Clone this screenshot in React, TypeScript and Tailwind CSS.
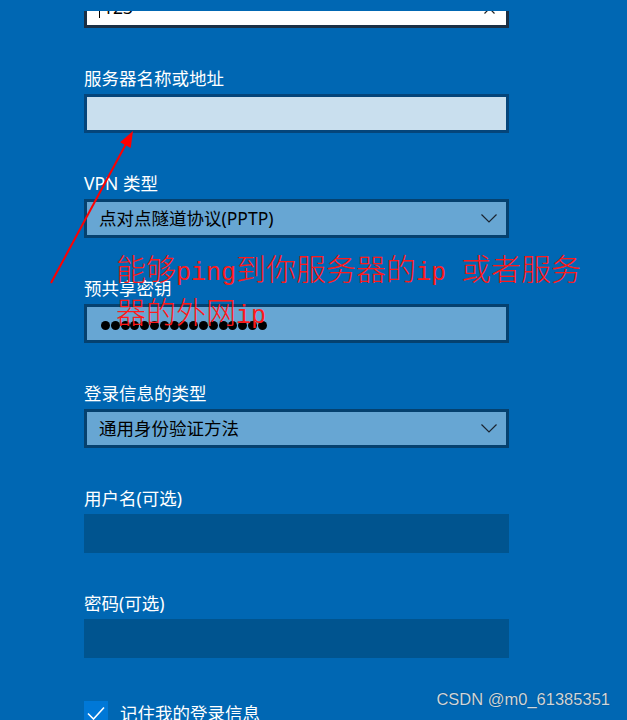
import React from 'react';

const Label: React.FC<{ children: React.ReactNode }> = ({ children }) => (
  <div className="h-6 leading-6 mb-1 text-white text-[17.5px] whitespace-nowrap">{children}</div>
);

const Chevron = () => (
  <svg width="16" height="9" viewBox="0 0 16 9" fill="none">
    <path d="M0.5 0.5 L8 8 L15.5 0.5" stroke="#1b2430" strokeWidth="1.2" />
  </svg>
);

const SelectBox: React.FC<{ value: string }> = ({ value }) => (
  <div className="h-[39px] border-[3px] border-[#05416f] bg-[#67a6d3] flex items-center justify-between pl-3 pr-[9px] text-black text-[17.5px] mb-[38px]">
    <span className="whitespace-nowrap">{value}</span>
    <Chevron />
  </div>
);

const App: React.FC = () => {
  return (
    <div className="relative w-[627px] h-[720px] overflow-hidden bg-[#0067b3] font-['Noto_Sans','Noto_Sans_CJK_SC',sans-serif]">
      {/* header strip the form scrolls under */}
      <div className="h-[11px] bg-[#0067b3] relative z-10" />

      <div className="h-[709px] overflow-hidden pl-[84px]">
        <div className="w-[425px] -mt-[22px]">
          {/* focused text box, mostly scrolled away */}
          <div className="h-[39px] border-[3px] border-[#1a2f45] bg-white flex items-center justify-between pl-3 pr-[11px] mb-[38px]">
            <div className="flex items-center -mt-[2px]">
              <div className="w-px h-[20px] bg-black" />
              <span className="ml-[3px] text-[17.5px] text-black">123</span>
            </div>
            <svg width="11" height="11" viewBox="0 0 11 11" className="-mt-[1px]">
              <path d="M0.5 0.5 L10.5 10.5 M10.5 0.5 L0.5 10.5" stroke="#222" strokeWidth="1.2" />
            </svg>
          </div>

          <Label>服务器名称或地址</Label>
          <div className="h-[39px] border-[3px] border-[#05457a] bg-[#c9dfee] mb-[38px]" />

          <Label>VPN 类型</Label>
          <SelectBox value="点对点隧道协议(PPTP)" />

          <Label>预共享密钥</Label>
          <div className="h-[39px] border-[3px] border-[#05416f] bg-[#67a6d3] flex items-center pl-[14px] pt-[3px] gap-[0.8px] mb-[38px]">
            {Array.from({ length: 17 }).map((_, i) => (
              <div key={i} className="w-[9px] h-[9px] rounded-full bg-black" />
            ))}
          </div>

          <Label>登录信息的类型</Label>
          <SelectBox value="通用身份验证方法" />

          <Label>用户名(可选)</Label>
          <div className="h-[39px] bg-[#00548f] mb-[38px]" />

          <Label>密码(可选)</Label>
          <div className="h-[39px] bg-[#00548f] mb-[43px]" />

          <div className="flex items-start gap-3">
            <div className="w-6 h-6 bg-[#0078d7] flex items-center justify-center shrink-0">
              <svg width="24" height="24" viewBox="0 0 24 24" fill="none">
                <path d="M4 12.5 L9.5 18 L20 6.5" stroke="white" strokeWidth="1.6" />
              </svg>
            </div>
            <span className="text-white text-[17.5px] leading-6 whitespace-nowrap">记住我的登录信息</span>
          </div>
        </div>
      </div>

      {/* red annotation arrow */}
      <svg className="absolute left-0 top-0 pointer-events-none" width="627" height="720">
        <line x1="51" y1="283" x2="126" y2="144" stroke="#ff0000" strokeWidth="2" />
        <polygon points="133,131 130.7,148 120.1,142.3" fill="#ff0000" />
      </svg>

      {/* red annotation text */}
      <div className="absolute left-[116px] top-[249px] text-[#ff1a1a] text-[30px] leading-[36px] font-light whitespace-nowrap font-['Noto_Sans_CJK_SC',serif]">
        <div>
          能够<span className="font-['Liberation_Mono',monospace] text-[25px]">ping</span>到你服务器的<span className="font-['Liberation_Mono',monospace] text-[25px] whitespace-pre">ip </span>或者服务
        </div>
        <div>
          器的外网<span className="font-['Liberation_Mono',monospace] text-[25px]">ip</span>
        </div>
      </div>

      {/* watermark */}
      <div className="absolute right-[17px] top-[691px] text-[16.5px] leading-none text-[#cdd6de] font-['Liberation_Sans',Arial,sans-serif] [text-shadow:0_0_1px_rgba(0,0,0,0.5)]">
        CSDN @m0_61385351
      </div>
    </div>
  );
};

export default App;
